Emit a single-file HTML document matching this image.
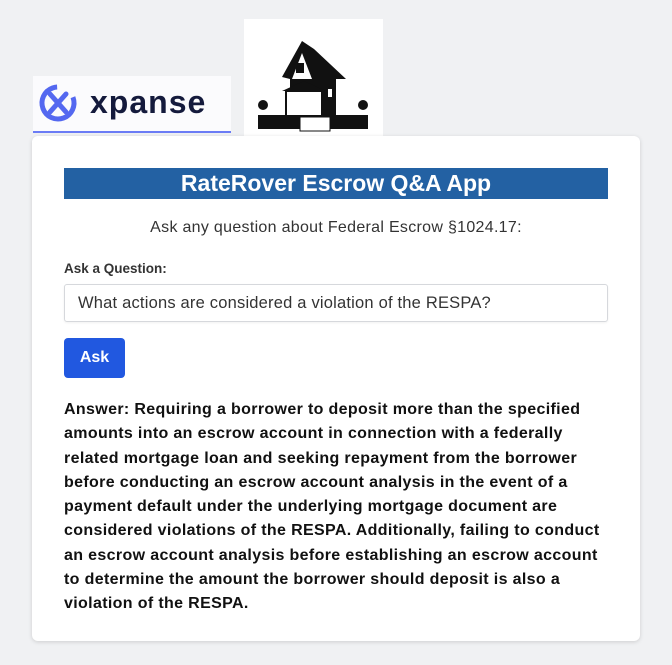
<!DOCTYPE html>
<html><head><meta charset="utf-8"><style>
body{margin:0;width:672px;height:665px;background:#f0f1f3;font-family:"Liberation Sans",sans-serif;position:relative;overflow:hidden}
.x{position:absolute;left:33px;top:76px;width:198px;height:57px;background:#fbfbfd;border-bottom:2px solid #6b7cf5;box-sizing:border-box}
.h{position:absolute;left:244px;top:19px;width:139px;height:117px;background:#fff}
.card{position:absolute;left:32px;top:136px;width:608px;height:505px;background:#fff;border-radius:6px;box-shadow:0 1px 4px rgba(0,0,0,.15)}
.title{position:absolute;left:32px;top:32px;width:544px;height:31px;background:#2361a3;color:#fff;font-weight:bold;font-size:23px;text-align:center;line-height:31px}
.sub{position:absolute;left:0;width:608px;top:83px;text-align:center;font-size:16px;color:#333;letter-spacing:.3px}
.lab{position:absolute;left:32px;top:125px;font-size:13.5px;font-weight:bold;color:#333}
.in{position:absolute;left:32px;top:148px;width:544px;height:38px;border:1px solid #d6d8dc;border-radius:3px;box-sizing:border-box;font-size:16.5px;line-height:36px;padding-left:13px;color:#333;box-shadow:0 1px 2px rgba(0,0,0,.06);letter-spacing:.2px}
.btn{position:absolute;left:32px;top:202px;width:61px;height:40px;background:#2158e0;border-radius:4px;color:#fff;font-weight:bold;font-size:16px;text-align:center;line-height:40px}
.ans{position:absolute;left:32px;top:262px;white-space:nowrap;font-weight:bold;font-size:16px;line-height:24.3px;color:#111;letter-spacing:.35px}
</style></head><body>
<div class="x">
<svg width="198" height="55" viewBox="0 0 198 55" style="position:absolute;left:0;top:0">
<circle cx="25" cy="27" r="16" fill="none" stroke="#5468f0" stroke-width="5" stroke-dasharray="80 20" transform="rotate(-20 25 27)"/>
<path d="M17 18 Q25 27 33 36 M33 18 Q25 27 17 36" stroke="#5468f0" stroke-width="5" fill="none" stroke-linecap="round"/>
<text x="57" y="37" font-family="Liberation Sans,sans-serif" font-size="32" font-weight="bold" fill="#141a3c" letter-spacing="1">xpanse</text>
</svg></div>
<div class="h">
<svg width="139" height="117" viewBox="0 0 139 117">
<polygon points="38,58 58,22 70,30 102,60 92,60 92,98 46,98 46,60" fill="#111"/>
<polygon points="48,60 58,34 68,60" fill="#fff"/>
<rect x="52" y="44" width="8" height="10" fill="#111"/>
<rect x="42" y="72" width="36" height="26" fill="#fff" stroke="#111" stroke-width="2"/>
<polygon points="38,72 60,62 82,72" fill="#111"/>
<rect x="84" y="70" width="4" height="8" fill="#fff"/><rect x="92" y="70" width="4" height="8" fill="#fff"/>
<circle cx="19" cy="86" r="5" fill="#111"/><circle cx="119" cy="86" r="5" fill="#111"/>
<rect x="14" y="96" width="110" height="14" fill="#111"/>
<rect x="56" y="98" width="30" height="14" fill="#fff" stroke="#111"/>
</svg></div>
<div class="card">
<div class="title">RateRover Escrow Q&amp;A App</div>
<div class="sub">Ask any question about Federal Escrow §1024.17:</div>
<div class="lab">Ask a Question:</div>
<div class="in">What actions are considered a violation of the RESPA?</div>
<div class="btn">Ask</div>
<div class="ans">Answer: Requiring a borrower to deposit more than the specified<br>amounts into an escrow account in connection with a federally<br>related mortgage loan and seeking repayment from the borrower<br>before conducting an escrow account analysis in the event of a<br>payment default under the underlying mortgage document are<br>considered violations of the RESPA. Additionally, failing to conduct<br>an escrow account analysis before establishing an escrow account<br>to determine the amount the borrower should deposit is also a<br>violation of the RESPA.</div>
</div>
</body></html>
